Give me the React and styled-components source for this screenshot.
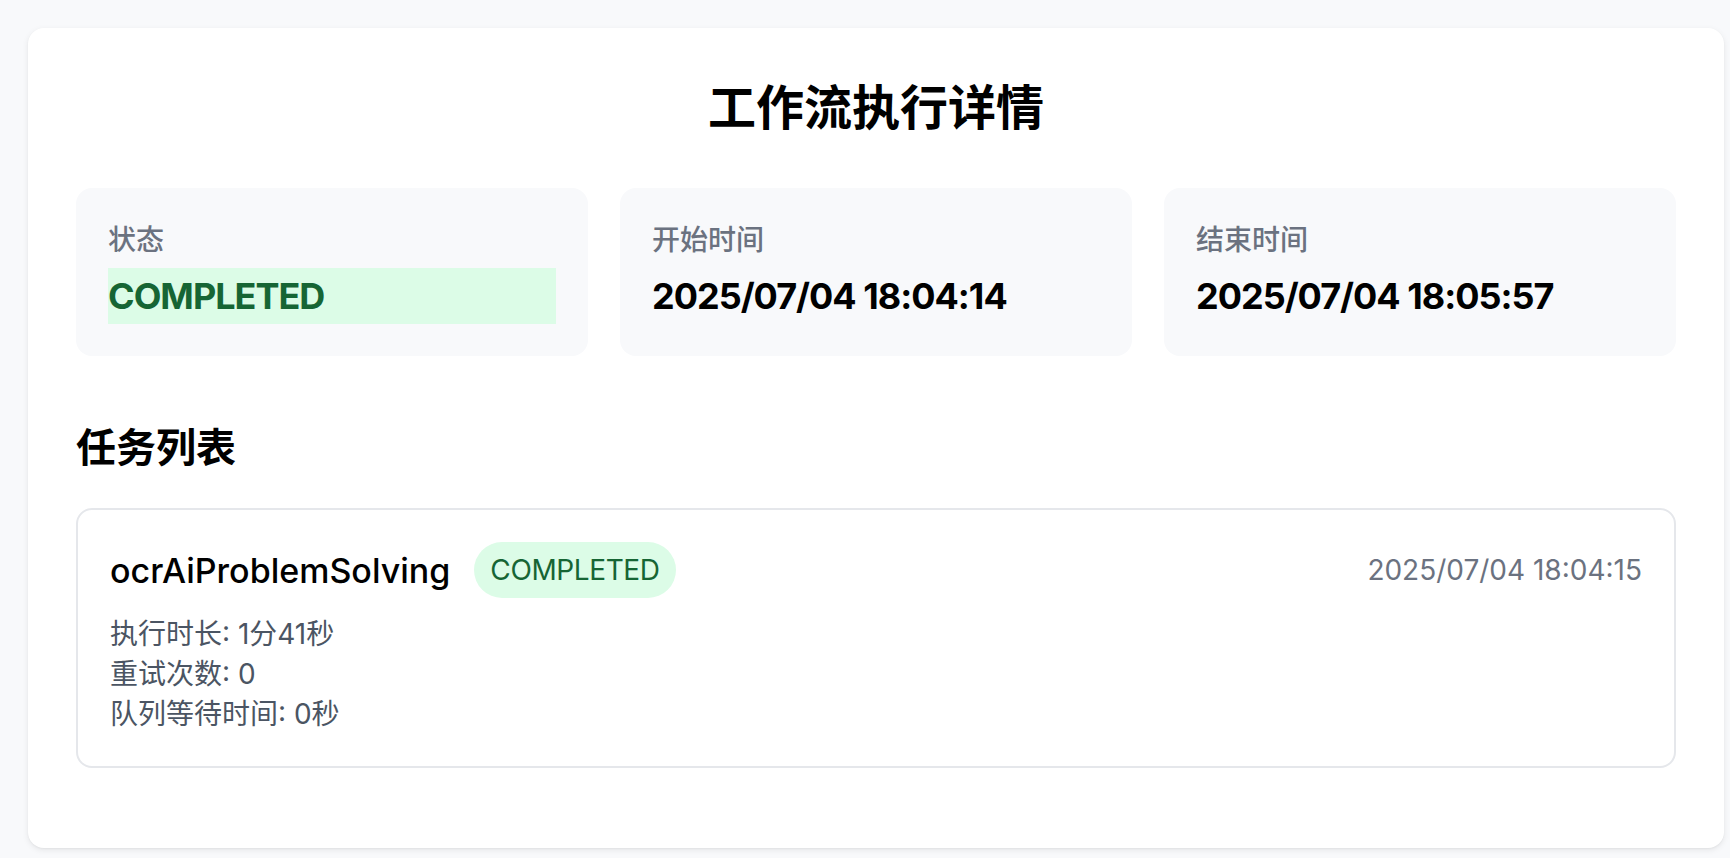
import React from "react";
import styled, { createGlobalStyle } from "styled-components";

const GlobalStyle = createGlobalStyle`
  html, body { margin: 0; padding: 0; background: #f8f9fb; }
  body {
    font-family: "Inter", "Noto Sans CJK SC", sans-serif;
    color: #000;
    -webkit-font-smoothing: antialiased;
  }
  * { box-sizing: border-box; }
`;

const Page = styled.div`
  padding: 28px 0 0 28px;
  min-height: 858px;
`;

const Panel = styled.div`
  width: 1696px;
  background: #fff;
  border-radius: 16px;
  box-shadow: 0 2px 6px rgba(0, 0, 0, 0.08), 0 1px 2px rgba(0, 0, 0, 0.04);
  padding: 48px 48px 80px;
`;

const Title = styled.h1`
  margin: 0 0 48px;
  text-align: center;
  font-size: 48px;
  line-height: 64px;
  font-weight: 700;
  color: #000;
`;

const StatGrid = styled.div`
  display: grid;
  grid-template-columns: repeat(3, 1fr);
  gap: 32px;
`;

const StatCard = styled.div`
  background: #f8f9fb;
  border-radius: 16px;
  padding: 32px;
`;

const StatLabel = styled.div`
  font-size: 28px;
  line-height: 40px;
  color: #6b7280;
  font-weight: 500;
`;

const StatValue = styled.div`
  margin-top: 8px;
  font-size: 36px;
  line-height: 56px;
  font-weight: 700;
  letter-spacing: -1px;
  color: ${(p) => (p.$status ? "#166534" : "#000")};
  background: ${(p) => (p.$status ? "#dcfce7" : "transparent")};
`;

const SectionTitle = styled.h2`
  margin: 64px 0 32px;
  font-size: 40px;
  line-height: 56px;
  font-weight: 700;
  color: #000;
`;

const TaskCard = styled.div`
  border: 2px solid #e5e7eb;
  border-radius: 16px;
  padding: 32px;
`;

const TaskHead = styled.div`
  display: flex;
  align-items: center;
  justify-content: space-between;
`;

const TaskName = styled.div`
  display: flex;
  align-items: center;
  gap: 24px;
  font-size: 34px;
  font-weight: 500;
  color: #000;
`;

const Badge = styled.span`
  display: inline-block;
  padding: 8px 16px;
  border-radius: 9999px;
  background: #dcfce7;
  color: #166534;
  font-size: 28px;
  line-height: 40px;
  font-weight: 400;
  letter-spacing: -0.4px;
`;

const TaskTime = styled.div`
  font-size: 28px;
  line-height: 40px;
  color: #6b7280;
`;

const Details = styled.div`
  margin-top: 16px;
  font-size: 28px;
  line-height: 40px;
  color: #4b5563;
`;

const stats = [
  { label: "状态", value: "COMPLETED", status: true },
  { label: "开始时间", value: "2025/07/04 18:04:14" },
  { label: "结束时间", value: "2025/07/04 18:05:57" },
];

export default function App() {
  return (
    <>
      <GlobalStyle />
      <Page>
        <Panel>
          <Title>工作流执行详情</Title>
          <StatGrid>
            {stats.map((s) => (
              <StatCard key={s.label}>
                <StatLabel>{s.label}</StatLabel>
                <StatValue $status={s.status}>{s.value}</StatValue>
              </StatCard>
            ))}
          </StatGrid>
          <SectionTitle>任务列表</SectionTitle>
          <TaskCard>
            <TaskHead>
              <TaskName>
                ocrAiProblemSolving
                <Badge>COMPLETED</Badge>
              </TaskName>
              <TaskTime>2025/07/04 18:04:15</TaskTime>
            </TaskHead>
            <Details>
              <div>执行时长: 1分41秒</div>
              <div>重试次数: 0</div>
              <div>队列等待时间: 0秒</div>
            </Details>
          </TaskCard>
        </Panel>
      </Page>
    </>
  );
}
